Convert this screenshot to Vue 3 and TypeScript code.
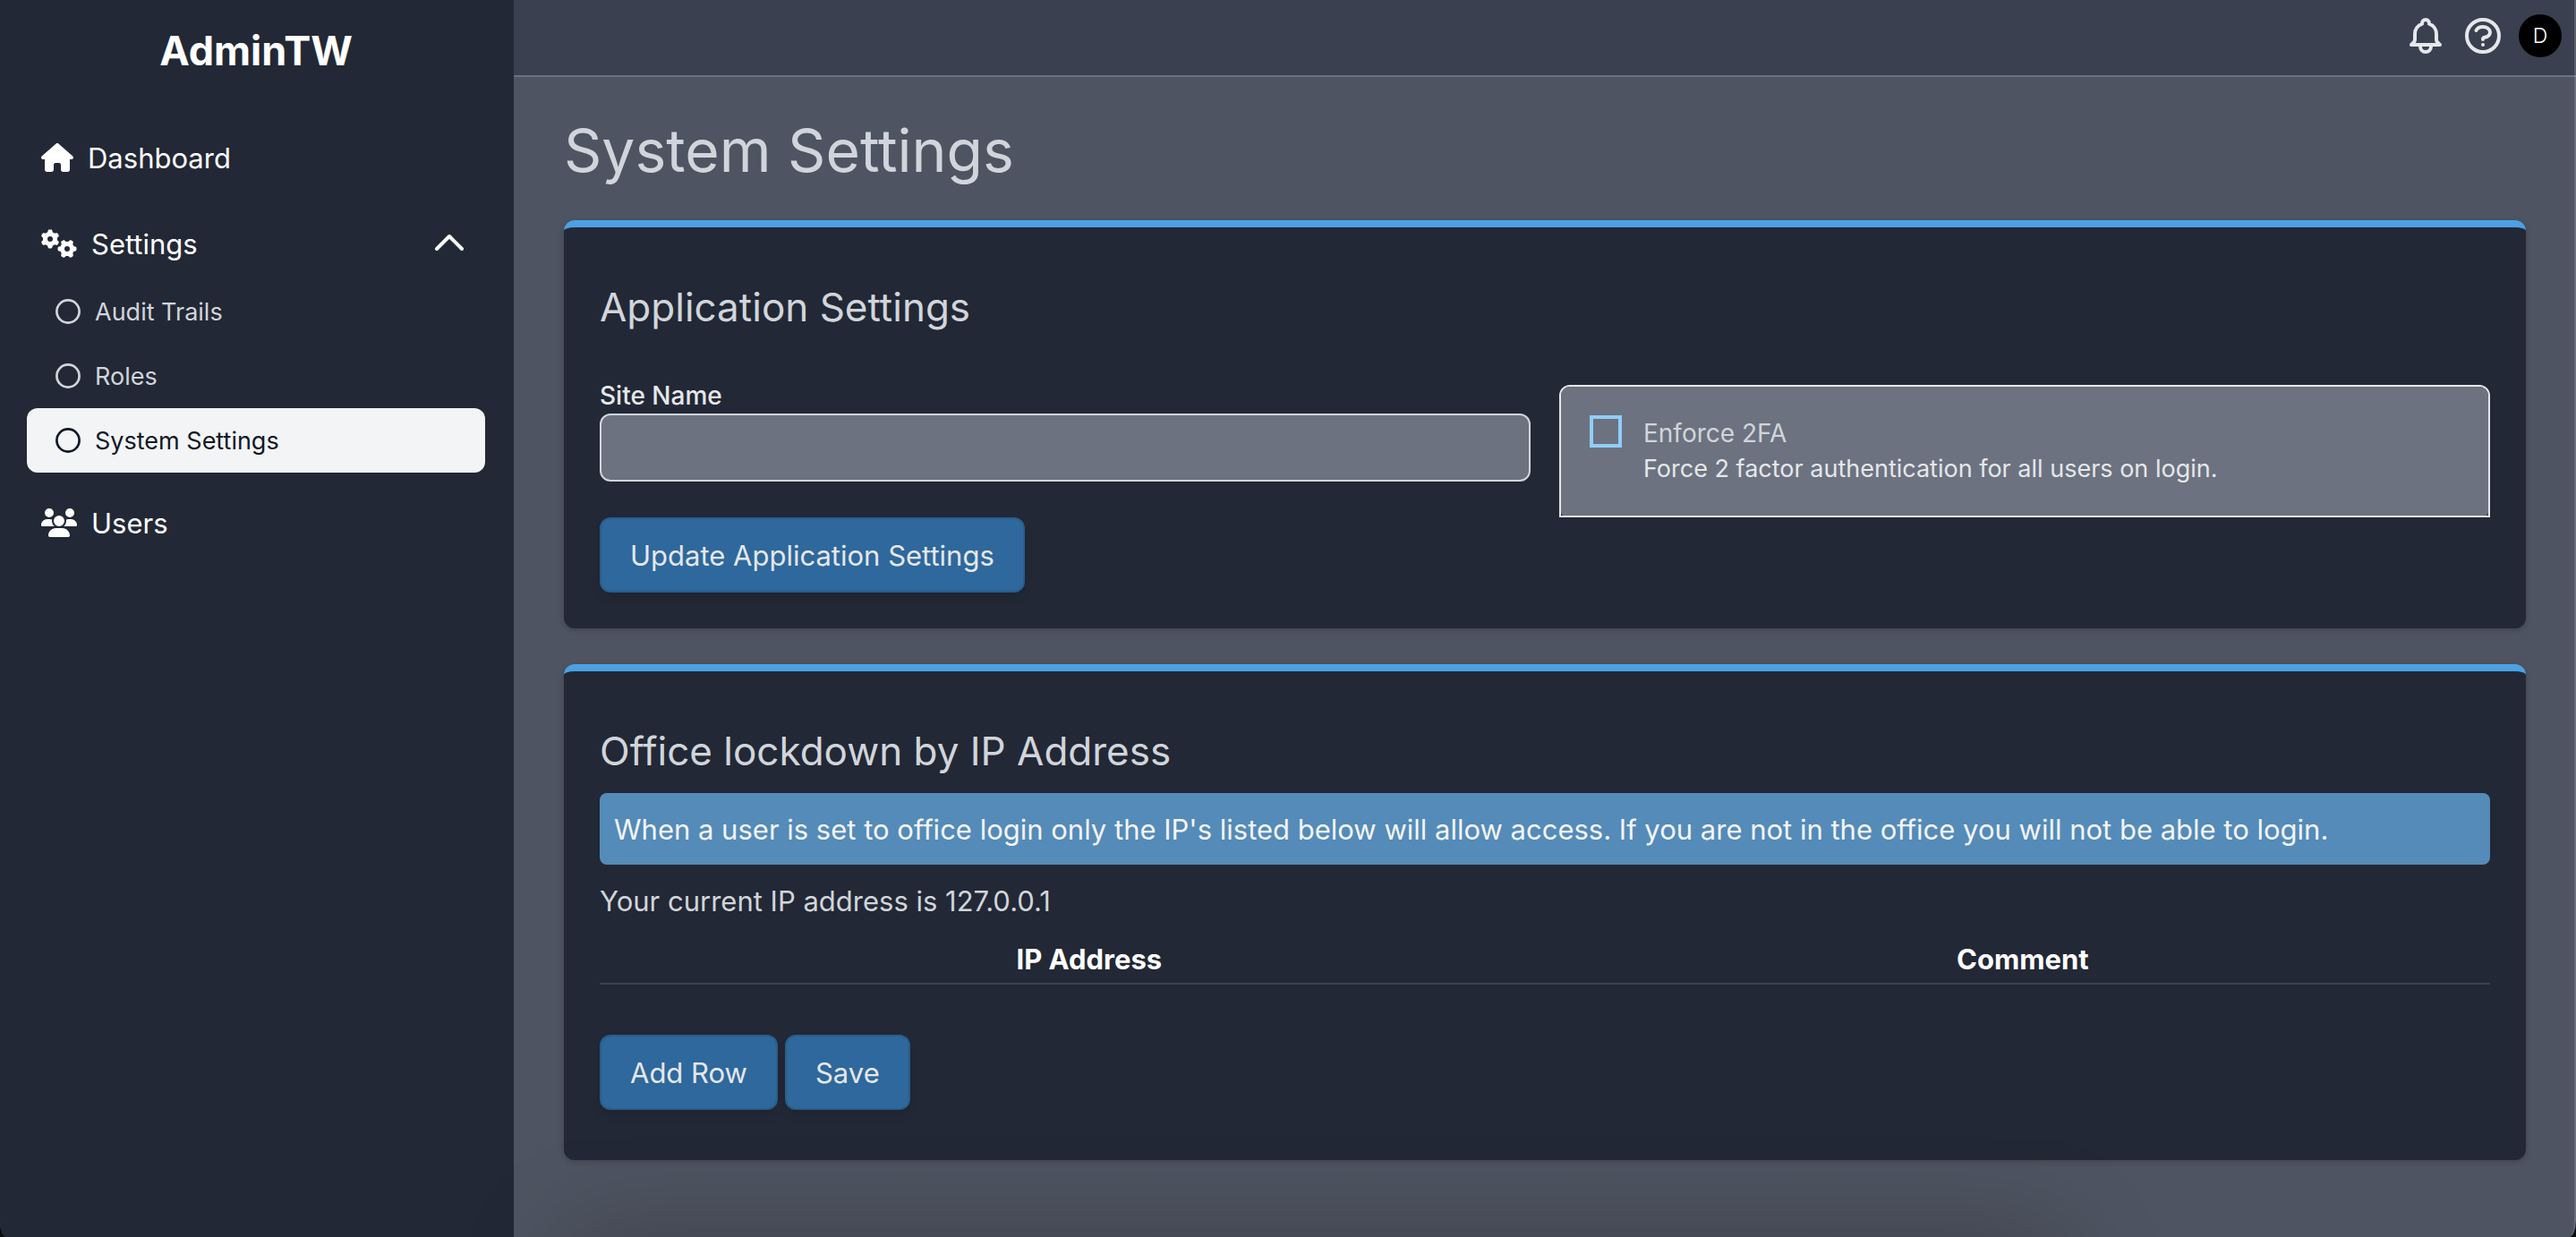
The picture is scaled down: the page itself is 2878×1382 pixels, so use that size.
<script setup lang="ts">
import { ref } from 'vue'

interface IpRow {
  ip: string
  comment: string
}

const settingsLinks: string[] = ['Audit Trails', 'Roles', 'System Settings']
const activeLink = ref('System Settings')
const settingsOpen = ref(true)

const siteName = ref('')
const enforce2fa = ref(false)
const currentIp = '127.0.0.1'
const rows = ref<IpRow[]>([])

function addRow(): void {
  rows.value.push({ ip: '', comment: '' })
}
</script>

<template>
  <div class="app">
    <aside class="sidebar">
      <div class="brand">AdminTW</div>
      <nav class="nav" aria-label="Main">
        <a class="nav-item" href="#">
          <svg class="icon-home" viewBox="0 0 576 512" aria-hidden="true">
            <path d="M575.8 255.5c0 18-15 32.1-32 32.1h-32l.7 160.2c0 2.7-.2 5.4-.5 8.1V472c0 22.1-17.9 40-40 40H456c-1.1 0-2.2 0-3.3-.1c-1.4 .1-2.8 .1-4.2 .1H416 392c-22.1 0-40-17.9-40-40V448 384c0-17.7-14.3-32-32-32H256c-17.7 0-32 14.3-32 32v64 24c0 22.1-17.9 40-40 40H160 128.1c-1.5 0-3-.1-4.5-.2c-1.2 .1-2.4 .2-3.6 .2H104c-22.1 0-40-17.9-40-40V360c0-.9 0-1.9 .1-2.8V287.6H32c-18 0-32-14-32-32.1c0-9 3-17 10-24L266.4 8c7-7 15-8 22-8s15 2 21 7L564.8 231.5c8 7 12 15 11 24z" />
          </svg>
          <span>Dashboard</span>
        </a>

        <div class="nav-group">
          <button
            type="button"
            class="nav-item"
            :aria-expanded="settingsOpen"
            @click="settingsOpen = !settingsOpen"
          >
            <svg class="icon-wide" viewBox="0 0 640 512" aria-hidden="true">
              <path d="M308.5 135.3c7.1-6.3 9.9-16.2 6.2-25c-2.3-5.3-4.8-10.5-7.6-15.5L304 89.4c-3-5-6.3-9.9-9.8-14.6c-5.7-7.6-15.7-10.1-24.7-7.1l-28.2 9.3c-10.7-8.8-23-16-36.2-20.9L199 27.1c-1.9-9.3-9.1-16.7-18.5-17.8C173.9 8.4 167.2 8 160.4 8h-.7c-6.8 0-13.5 .4-20.1 1.2c-9.4 1.1-16.6 8.6-18.5 17.8L115 56.1c-13.3 5-25.5 12.1-36.2 20.9L50.5 67.8c-9-3-19-.5-24.7 7.1c-3.5 4.7-6.8 9.6-9.9 14.6l-3 5.3c-2.8 5-5.3 10.2-7.6 15.6c-3.7 8.7-.9 18.6 6.2 25l22.2 19.8C32.6 161.9 32 168.9 32 176s.6 14.1 1.7 20.9L11.5 216.7c-7.1 6.3-9.9 16.2-6.2 25c2.3 5.3 4.8 10.5 7.6 15.6l3 5.2c3 5.1 6.3 9.9 9.9 14.6c5.7 7.6 15.7 10.1 24.7 7.1l28.2-9.3c10.7 8.8 23 16 36.2 20.9l6.1 29.1c1.9 9.3 9.1 16.7 18.5 17.8c6.7 .8 13.5 1.2 20.4 1.2s13.7-.4 20.4-1.2c9.4-1.1 16.6-8.6 18.5-17.8l6.1-29.1c13.3-5 25.5-12.1 36.2-20.9l28.2 9.3c9 3 19 .5 24.7-7.1c3.5-4.7 6.8-9.5 9.8-14.6l3.1-5.4c2.8-5 5.3-10.2 7.6-15.5c3.7-8.7 .9-18.6-6.2-25l-22.2-19.8c1.1-6.8 1.7-13.8 1.7-20.9s-.6-14.1-1.7-20.9l22.2-19.8zM112 176a48 48 0 1 1 96 0 48 48 0 1 1 -96 0zM504.7 500.5c6.3 7.1 16.2 9.9 25 6.2c5.3-2.3 10.5-4.8 15.5-7.6l5.4-3.1c5-3 9.9-6.3 14.6-9.8c7.6-5.7 10.1-15.7 7.1-24.7l-9.3-28.2c8.8-10.7 16-23 20.9-36.2l29.1-6.1c9.3-1.9 16.7-9.1 17.8-18.5c.8-6.7 1.2-13.5 1.2-20.4s-.4-13.7-1.2-20.4c-1.1-9.4-8.6-16.6-17.8-18.5L583.9 307c-5-13.3-12.1-25.5-20.9-36.2l9.3-28.2c3-9 .5-19-7.1-24.7c-4.7-3.5-9.6-6.8-14.6-9.9l-5.3-3c-5-2.8-10.2-5.3-15.6-7.6c-8.7-3.7-18.6-.9-25 6.2l-19.8 22.2c-6.8-1.1-13.8-1.7-20.9-1.7s-14.1 .6-20.9 1.7l-19.8-22.2c-6.3-7.1-16.2-9.9-25-6.2c-5.3 2.3-10.5 4.8-15.6 7.6l-5.2 3c-5.1 3-9.9 6.3-14.6 9.9c-7.6 5.7-10.1 15.7-7.1 24.7l9.3 28.2c-8.8 10.7-16 23-20.9 36.2L315.1 313c-9.3 1.9-16.7 9.1-17.8 18.5c-.8 6.7-1.2 13.5-1.2 20.4s.4 13.7 1.2 20.4c1.1 9.4 8.6 16.6 17.8 18.5l29.1 6.1c5 13.3 12.1 25.5 20.9 36.2l-9.3 28.2c-3 9-.5 19 7.1 24.7c4.7 3.5 9.5 6.8 14.6 9.8l5.4 3.1c5 2.8 10.2 5.3 15.5 7.6c8.7 3.7 18.6 .9 25-6.2l19.8-22.2c6.8 1.1 13.8 1.7 20.9 1.7s14.1-.6 20.9-1.7l19.8 22.2zM464 304a48 48 0 1 1 0 96 48 48 0 1 1 0-96z" />
            </svg>
            <span>Settings</span>
            <svg class="chevron" viewBox="0 0 24 24" aria-hidden="true">
              <path :d="settingsOpen ? 'M5 15l7-7 7 7' : 'M5 9l7 7 7-7'" />
            </svg>
          </button>
          <div v-if="settingsOpen" class="subnav">
            <a
              v-for="link in settingsLinks"
              :key="link"
              href="#"
              class="subnav-item"
              :class="{ active: link === activeLink }"
              @click.prevent="activeLink = link"
            >
              <svg class="icon-dot" viewBox="0 0 28 28" aria-hidden="true">
                <circle cx="14" cy="14" r="12.6" />
              </svg>
              <span>{{ link }}</span>
            </a>
          </div>
        </div>

        <a class="nav-item" href="#">
          <svg class="icon-wide" viewBox="0 0 640 512" aria-hidden="true">
            <path d="M144 0a80 80 0 1 1 0 160A80 80 0 1 1 144 0zM512 0a80 80 0 1 1 0 160A80 80 0 1 1 512 0zM0 298.7C0 239.8 47.8 192 106.7 192h42.7c15.9 0 31 3.5 44.6 9.7c-1.3 7.2-1.9 14.7-1.9 22.3c0 38.2 16.8 72.5 43.3 96c-.2 0-.4 0-.7 0H21.3C9.6 320 0 310.4 0 298.7zM405.3 320c-.2 0-.4 0-.7 0c26.6-23.5 43.3-57.8 43.3-96c0-7.6-.7-15-1.9-22.3c13.6-6.3 28.7-9.7 44.6-9.7h42.7C592.2 192 640 239.8 640 298.7c0 11.8-9.6 21.3-21.3 21.3H405.3zM224 224a96 96 0 1 1 192 0 96 96 0 1 1 -192 0zM128 485.3C128 411.7 187.7 352 261.3 352H378.7C452.3 352 512 411.7 512 485.3c0 14.7-11.9 26.7-26.7 26.7H154.7c-14.7 0-26.7-11.9-26.7-26.7z" />
          </svg>
          <span>Users</span>
        </a>
      </nav>
    </aside>

    <div class="page">
      <header class="topbar">
        <button type="button" class="icon-button" aria-label="Notifications">
          <svg viewBox="0 0 24 24" aria-hidden="true">
            <path d="M15 17h5l-1.405-1.405A2.032 2.032 0 0118 14.158V11a6.002 6.002 0 00-4-5.659V5a2 2 0 10-4 0v.341C7.67 6.165 6 8.388 6 11v3.159c0 .538-.214 1.055-.595 1.436L4 17h5m6 0v1a3 3 0 11-6 0v-1m6 0H9" />
          </svg>
        </button>
        <button type="button" class="icon-button" aria-label="Help">
          <svg viewBox="0 0 24 24" aria-hidden="true">
            <path d="M8.228 9c.549-1.165 2.03-2 3.772-2 2.21 0 4 1.343 4 3 0 1.4-1.278 2.575-3.006 2.907-.542.104-.994.54-.994 1.093m0 3h.01M21 12a9 9 0 11-18 0 9 9 0 0118 0z" />
          </svg>
        </button>
        <button type="button" class="avatar">D</button>
      </header>

      <main class="content">
        <h1>System Settings</h1>

        <form class="card" @submit.prevent>
          <h2>Application Settings</h2>
          <div class="form-grid">
            <div class="field">
              <label for="site-name">Site Name</label>
              <input id="site-name" v-model="siteName" type="text" />
            </div>
            <div class="option">
              <div class="option-body">
                <input
                  id="enforce-2fa"
                  v-model="enforce2fa"
                  type="checkbox"
                  aria-describedby="enforce-2fa-help"
                />
                <div class="option-text">
                  <label for="enforce-2fa">Enforce 2FA</label>
                  <p id="enforce-2fa-help">Force 2 factor authentication for all users on login.</p>
                </div>
              </div>
            </div>
          </div>
          <button type="submit" class="btn">Update Application Settings</button>
        </form>

        <form class="card card-ips" @submit.prevent>
          <h2>Office lockdown by IP Address</h2>
          <p class="notice">
            When a user is set to office login only the IP's listed below will allow access. If you are not in the office you will not be able to login.
          </p>
          <p class="current-ip">Your current IP address is {{ currentIp }}</p>
          <table>
            <thead>
              <tr>
                <th scope="col">IP Address</th>
                <th scope="col">Comment</th>
                <td class="actions"></td>
              </tr>
            </thead>
            <tbody>
              <tr v-for="(row, i) in rows" :key="i">
                <td><input v-model="row.ip" type="text" aria-label="IP Address" /></td>
                <td><input v-model="row.comment" type="text" aria-label="Comment" /></td>
                <td></td>
              </tr>
            </tbody>
          </table>
          <div class="buttons">
            <button type="button" class="btn" @click="addRow">Add Row</button>
            <button type="submit" class="btn">Save</button>
          </div>
        </form>
      </main>
    </div>
    <div class="bottom-shade" aria-hidden="true"></div>
  </div>
</template>

<style>
body {
  margin: 0;
  background: #0b0c10;
}
</style>

<style scoped>
.app,
.app * {
  box-sizing: border-box;
}

.app {
  position: relative;
  display: flex;
  min-height: 100vh;
  overflow: hidden;
  border-radius: 0 0 8px 8px / 0 0 18px 18px;
  background: #4e5461;
  color: #d1d5db;
  font-family: Inter, "Liberation Sans", sans-serif;
  font-size: 31px;
  line-height: 48px;
}

/* thin light edge along the window's right side */
.app::after {
  content: "";
  position: absolute;
  inset: 0;
  border-right: 2px solid rgba(255, 255, 255, 0.16);
  border-radius: inherit;
  pointer-events: none;
}

.bottom-shade {
  position: absolute;
  top: 100%;
  left: 22%;
  right: 20%;
  height: 160px;
  box-shadow: 0 0 120px rgba(0, 0, 0, 0.24);
  pointer-events: none;
}

h1,
h2,
p {
  margin: 0;
  font-weight: 400;
}

button,
input {
  font: inherit;
  color: inherit;
}

svg {
  flex: none;
  fill: currentColor;
}

.sidebar {
  flex: none;
  width: 574px;
  padding: 24px 32px 24px 30px;
  background: #222835;
  color: #fff;
}

.brand {
  margin-bottom: 50px;
  font-size: 45px;
  font-weight: 700;
  line-height: 66px;
  text-align: center;
}

.nav {
  display: flex;
  flex-direction: column;
  gap: 24px;
}

.nav-group {
  display: flex;
  flex-direction: column;
  gap: 4px;
  margin-bottom: -4px;
}

.nav-item,
.subnav-item {
  display: flex;
  align-items: center;
  gap: 16px;
  width: 100%;
  height: 72px;
  padding: 0 16px;
  border: 0;
  border-radius: 12px;
  background: none;
  text-decoration: none;
  color: inherit;
  cursor: pointer;
}

.nav span {
  padding-top: 2px;
}

.subnav-item {
  padding: 0 32px;
  font-size: 27px;
  color: #d1d5db;
}

.subnav-item.active {
  background: #f3f4f6;
  color: #111827;
}

.icon-home {
  width: 36px;
  height: 32px;
}

.icon-wide {
  width: 40px;
  height: 32px;
}

.icon-dot {
  width: 28px;
  height: 28px;
  fill: none;
  stroke: currentColor;
  stroke-width: 2.7;
}

.chevron {
  width: 48px;
  height: 48px;
  margin-left: auto;
}

.chevron,
.icon-button svg {
  fill: none;
  stroke: currentColor;
  stroke-width: 2;
  stroke-linecap: round;
  stroke-linejoin: round;
}

.page {
  flex: 1;
  min-width: 0;
}

.topbar {
  display: flex;
  align-items: center;
  justify-content: flex-end;
  gap: 16px;
  padding: 16px 16px 20px;
  border-bottom: 2px solid #6b7280;
  background: #3a4050;
  color: #e5e7eb;
}

.icon-button {
  display: flex;
  margin: -2px 0;
  padding: 0;
  border: 0;
  background: none;
  cursor: pointer;
}

.icon-button svg {
  width: 48px;
  height: 48px;
}

.avatar {
  width: 48px;
  height: 48px;
  padding: 0;
  border: 0;
  border-radius: 50%;
  background: #000;
  color: #fff;
  font-size: 23px;
  font-weight: 300;
  cursor: pointer;
}

.content {
  display: flex;
  flex-direction: column;
  gap: 40px;
  padding: 40px 56px;
}

h1 {
  margin-bottom: -4px;
  font-size: 66px;
  line-height: 84px;
}

h2 {
  font-size: 44px;
  line-height: 66px;
}

.card {
  padding: 56px 40px 40px;
  border-top: 8px solid #4ba1e3;
  border-radius: 12px;
  background: #222835;
  box-shadow: 0 2px 6px rgba(0, 0, 0, 0.2);
}

.card-ips {
  padding-bottom: 56px;
}

.form-grid {
  display: grid;
  grid-template-columns: 1fr 1fr;
  gap: 32px;
  margin-top: 46px;
  font-size: 27px;
  line-height: 40px;
}

.form-grid label {
  font-size: 28px;
}

.field {
  display: flex;
  flex-direction: column;
  color: #e5e7eb;
}

.field label {
  font-weight: 500;
}

.field input {
  height: 76px;
  padding: 0 24px;
  border: 2px solid #d1d5db;
  border-radius: 12px;
  background: #6c7280;
}

.option {
  margin-top: 8px;
  border: 2px solid #e5e7eb;
  border-radius: 12px 12px 0 0;
}

.option-body {
  display: flex;
  gap: 24px;
  padding: 32px;
  border-radius: 10px 10px 4px 4px;
  background: #6c7280;
}

.option-body input {
  flex: none;
  appearance: none;
  width: 36px;
  height: 36px;
  margin: 0;
  border: 4px solid #90cdf9;
  cursor: pointer;
}

.option-body input:checked {
  background: #2e689c;
}

.option-text label {
  display: block;
}

.option-text p {
  color: #e5e7eb;
}

.btn {
  height: 84px;
  padding: 2px 32px 0;
  border: 2px solid #2a5d8b;
  border-radius: 12px;
  background: #2e689c;
  box-shadow: 0 8px 12px -2px rgba(0, 0, 0, 0.1);
  color: #e5e7eb;
  cursor: pointer;
}

.notice {
  margin-top: 14px;
  padding: 17px 16px 15px;
  border-radius: 8px;
  background: #548bb8;
  color: #f3f4f6;
}

.current-ip {
  margin-top: 16px;
  padding-top: 1px;
}

table {
  width: 100%;
  margin-top: 16px;
  border-collapse: separate;
  border-spacing: 0;
  color: #fff;
}

th,
.actions {
  padding: 1px 0 2px;
  border-bottom: 2px solid #3a4050;
  font-weight: 700;
  text-align: center;
}

.actions {
  width: 26px;
}

td input {
  width: 100%;
  height: 76px;
  border: 2px solid #d1d5db;
  border-radius: 12px;
  background: #6c7280;
}

.buttons {
  display: flex;
  gap: 8px;
  margin-top: 56px;
}
</style>
